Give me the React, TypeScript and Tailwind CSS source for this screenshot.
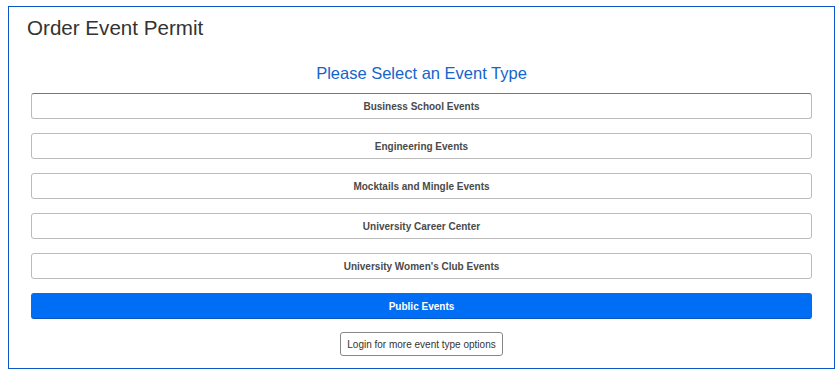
import React from "react";

const events = [
  "Business School Events",
  "Engineering Events",
  "Mocktails and Mingle Events",
  "University Career Center",
  "University Women's Club Events",
];

export default function App() {
  return (
    <div className="w-[840px] h-[377px] bg-white pt-[6px] pl-[8px]" style={{ fontFamily: '"Liberation Sans", Arial, sans-serif' }}>
      <div className="w-[827px] h-[363px] border border-[#0b57c9] flex flex-col">
        <h1 className="text-[20.6px] leading-[24px] text-[#333333] pl-[18px] pt-[9px]">Order Event Permit</h1>
        <h2 className="text-[16.5px] leading-[20px] text-[#1464cc] text-center mt-[23px]">Please Select an Event Type</h2>
        <div className="flex flex-col gap-[14px] px-[22px] mt-[10px]">
          {events.map((e, i) => (
            <button
              key={e}
              className={`h-[26px] w-full rounded-[3px] border bg-white text-[10px] font-bold text-[#4a4a4a] ${i === 0 ? "border-[#bbbbbb] border-t-[#777777]" : "border-[#bbbbbb]"}`}
            >
              {e}
            </button>
          ))}
          <button className="h-[26px] w-full rounded-[3px] bg-[#006df5] border border-[#0a6af0] border-b-[#0a55c0] text-[10px] font-bold text-white">
            Public Events
          </button>
        </div>
        <div className="flex justify-center mt-[13px]">
          <button className="h-[24px] px-[6px] rounded-[3px] border border-[#888888] bg-white text-[10px] text-[#333333]">
            Login for more event type options
          </button>
        </div>
      </div>
    </div>
  );
}
